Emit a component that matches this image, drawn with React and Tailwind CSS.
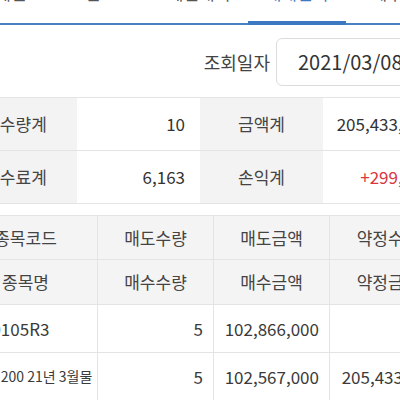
const tabs = [
  { name: "미체결" },
  { name: "잔고" },
  { name: "체결내역" },
  { name: "매매일지", active: true },
  { name: "예수금" },
];

const summary = [
  ["총수량계", "10", "금액계", "205,433,000"],
  ["수수료계", "6,163", "손익계", "+299,000"],
];

const rows = [
  { code: "10105R3", sellQty: "5", sellAmt: "102,866,000", total: "" },
  { code: "미니200 21년 3월물", small: true, sellQty: "5", sellAmt: "102,567,000", total: "205,433,000" },
];

export default function App() {
  return (
    <div className="w-[400px] h-[400px] overflow-hidden bg-white font-['Noto_Sans_CJK_KR','Noto_Sans',sans-serif] text-[#3a3a3a]">
      <div className="w-[492px] -ml-[46px]">
        {/* tabs */}
        <div className="flex items-end -mt-[32px]">
          {tabs.map((t) =>
            t.active ? (
              <div
                key={t.name}
                className="w-[98px] h-[57px] flex items-end justify-center pb-[18px] border-b-4 border-[#3d78c2] text-[17px] leading-[20px] text-[#3d78c2]"
              >
                {t.name}
              </div>
            ) : (
              <div
                key={t.name}
                className="w-[98px] h-[57px] flex items-end justify-center pb-[20px] border-b-2 border-[#4a80c4] text-[17px] leading-[20px] text-[#555]"
              >
                {t.name}
              </div>
            )
          )}
        </div>

        {/* date */}
        <div className="flex items-center justify-end gap-[6px] pt-[13px] pb-[11px] pr-[10px]">
          <span className="text-[18px] text-[#444]">조회일자</span>
          <div className="w-[160px] h-[48px] rounded-[6px] border border-[#dcdcdc] flex items-center pl-[21px] text-[20px] text-[#333]">
            2021/03/08
          </div>
        </div>

        {/* summary */}
        <div className="grid grid-cols-4 border-t border-[#e4e4e4]">
          {summary.map((r, i) =>
            r.map((c, j) => (
              <div
                key={i + "-" + j}
                className={
                  j % 2 === 0
                    ? "h-[53px] flex items-center justify-center bg-[#f3f3f3] border-b border-[#e4e4e4] text-[17px] text-[#444]"
                    : "h-[53px] flex items-center justify-end pr-[15px] border-b border-[#e4e4e4] text-[17px] " +
                      (c.startsWith("+") ? "text-[#d9363e]" : "text-[#333]")
                }
              >
                {c}
              </div>
            ))
          )}
        </div>

        {/* list table */}
        <div className="mt-[11px] border-t border-[#e4e4e4] grid grid-cols-[144px_116px_116px_116px] text-[17px]">
          <div className="h-[44px] flex items-center justify-center bg-[#f4f4f4] border-b border-r border-[#e4e4e4] text-[#444]">종목코드</div>
          <div className="h-[44px] flex items-center justify-center bg-[#f4f4f4] border-b border-r border-[#e4e4e4] text-[#444]">매도수량</div>
          <div className="h-[44px] flex items-center justify-center bg-[#f4f4f4] border-b border-r border-[#e4e4e4] text-[#444]">매도금액</div>
          <div className="h-[44px] flex items-center justify-center bg-[#f4f4f4] border-b border-[#e4e4e4] text-[#444]">약정수량</div>

          <div className="h-[45px] flex items-center justify-center bg-[#f4f4f4] border-b border-r border-[#e4e4e4] text-[#444]">종목명</div>
          <div className="h-[45px] flex items-center justify-center bg-[#f4f4f4] border-b border-r border-[#e4e4e4] text-[#444]">매수수량</div>
          <div className="h-[45px] flex items-center justify-center bg-[#f4f4f4] border-b border-r border-[#e4e4e4] text-[#444]">매수금액</div>
          <div className="h-[45px] flex items-center justify-center bg-[#f4f4f4] border-b border-[#e4e4e4] text-[#444]">약정금액</div>

          {rows.map((r) => (
            <div key={r.code} className="contents">
              <div
                className={
                  "h-[48px] flex items-center whitespace-nowrap border-b border-r border-[#e4e4e4] " +
                  (r.small ? "pl-[21px] text-[14px]" : "pl-[28px] text-[17px]")
                }
              >
                {r.code}
              </div>
              <div className="h-[48px] flex items-center justify-end pr-[10px] border-b border-r border-[#e4e4e4]">{r.sellQty}</div>
              <div className="h-[48px] flex items-center justify-end pr-[10px] border-b border-r border-[#e4e4e4]">{r.sellAmt}</div>
              <div className="h-[48px] flex items-center justify-end pr-[10px] border-b border-[#e4e4e4]">{r.total}</div>
            </div>
          ))}
        </div>
      </div>
    </div>
  );
}
